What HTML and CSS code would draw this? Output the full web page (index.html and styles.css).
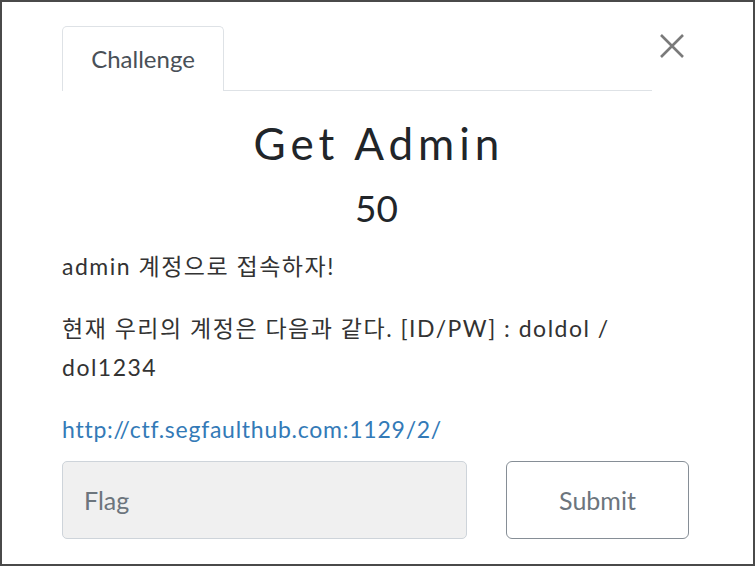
FILE: index.html
```html
<!DOCTYPE html>
<html lang="ko">
<head>
<meta charset="utf-8">
<link rel="stylesheet" href="styles.css">
</head>
<body>
<div class="frame">
  <button class="close" aria-label="Close">
    <svg width="26" height="26" viewBox="0 0 26 26"><path d="M2 2 L24 24 M24 2 L2 24" stroke="#7a7a7a" stroke-width="2.6" fill="none"/></svg>
  </button>
  <div class="content">
    <div class="tabs">
      <div class="tab">Challenge</div>
      <div class="tabline"></div>
    </div>
    <h3 class="name">Get Admin</h3>
    <h4 class="value">50</h4>
    <div class="desc">
      <p>admin 계정으로 접속하자!</p>
      <p>현재 우리의 계정은 다음과 같다. [ID/PW] : doldol / dol1234</p>
      <p><a href="#">http://ctf.segfaulthub.com:1129/2/</a></p>
    </div>
    <div class="form">
      <input class="flag" type="text" placeholder="Flag">
      <button class="submit">Submit</button>
    </div>
  </div>
</div>
</body>
</html>
```
FILE: styles.css
```css
* { box-sizing: border-box; }
html, body { margin: 0; padding: 0; background: #fff; }
body {
  font-family: Lato, "Noto Sans CJK KR", sans-serif;
  color: #212529;
}
.frame {
  position: relative;
  width: 755px;
  height: 566px;
  border: 2px solid #4a4a4a;
  overflow: hidden;
}
.close {
  position: absolute;
  top: 31px;
  left: 657px;
  padding: 0;
  border: 0;
  background: none;
  width: 26px;
  height: 26px;
  display: flex;
}
.content {
  padding: 24px 0 0 60px;
  width: 689px;
}
.tabs {
  display: flex;
  align-items: flex-end;
}
.tab {
  width: 162px;
  height: 65px;
  border: 1px solid #dee2e6;
  border-bottom: 0;
  border-radius: 5px 5px 0 0;
  display: flex;
  align-items: center;
  justify-content: center;
  font-size: 24px;
  color: #495057;
  padding-bottom: 1px;
}
.tabline {
  width: 428px;
  border-bottom: 1px solid #dee2e6;
}
.name {
  margin: 24px 0 0;
  padding-left: 5px;
  text-align: center;
  font-weight: 400;
  font-size: 44px;
  letter-spacing: 5px;
  line-height: 56px;
}
.value {
  margin: 14px 0 0;
  text-align: center;
  font-weight: 400;
  font-size: 37px;
  line-height: 46px;
}
.desc {
  margin-top: 16px;
  width: 600px;
  font-size: 23px;
  letter-spacing: 1.5px;
  line-height: 39px;
  color: #333;
}
.desc p { margin: 0 0 23px; }
.desc p:last-child { margin-bottom: 0; }
.desc a { color: #337ab7; text-decoration: none; letter-spacing: 0.75px; }
.form {
  display: flex;
  gap: 39px;
  margin-top: 12px;
}
.flag {
  width: 405px;
  height: 78px;
  background: #f0f0f0;
  border: 1px solid #ced4da;
  border-radius: 5px;
  padding: 0 0 0 21px;
  font-family: Lato, sans-serif;
  font-size: 25px;
  color: #495057;
}
.flag::placeholder { color: #6c757d; }
.submit {
  width: 183px;
  height: 78px;
  background: #fff;
  border: 1.5px solid #868e96;
  border-radius: 6px;
  font-family: Lato, sans-serif;
  font-size: 25px;
  color: #6c757d;
}
```
